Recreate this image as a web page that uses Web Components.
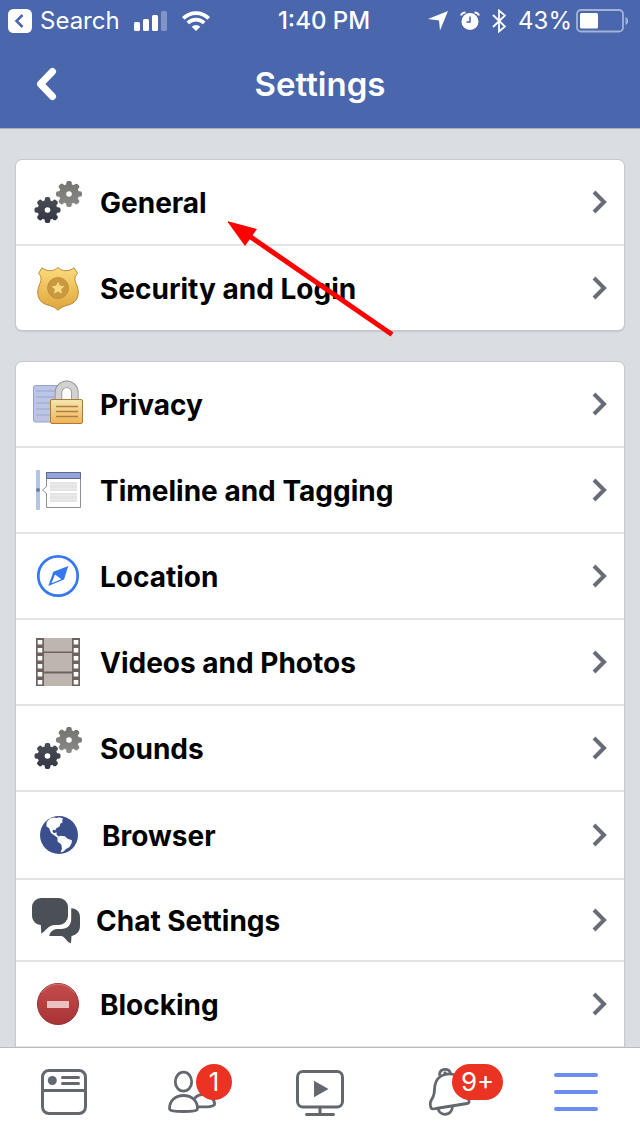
<!DOCTYPE html>
<html lang="en">
<head>
<meta charset="utf-8">
<meta name="viewport" content="width=device-width, initial-scale=1">
<title>Settings</title>
<style>
  body {
    margin: 0;
    font-family: Inter, Roboto, "Liberation Sans", sans-serif;
  }
</style>
</head>
<body>
<settings-screen>
  <status-bar slot="top" back="Search" time="1:40 PM" battery="43%"></status-bar>
  <nav-header slot="top">Settings</nav-header>

  <settings-group>
    <settings-row icon="gears">General</settings-row>
    <settings-row icon="badge">Security and Login</settings-row>
  </settings-group>
  <settings-group continued>
    <settings-row icon="lock">Privacy</settings-row>
    <settings-row icon="timeline">Timeline and Tagging</settings-row>
    <settings-row icon="compass">Location</settings-row>
    <settings-row icon="film">Videos and Photos</settings-row>
    <settings-row icon="gears">Sounds</settings-row>
    <settings-row icon="globe">Browser</settings-row>
    <settings-row icon="chat">Chat Settings</settings-row>
    <settings-row icon="block">Blocking</settings-row>
  </settings-group>
  <pointer-arrow></pointer-arrow>

  <tab-bar slot="bottom">
    <tab-item icon="feed" label="News Feed"></tab-item>
    <tab-item icon="friends" label="Friend Requests" count="1"></tab-item>
    <tab-item icon="video" label="Videos"></tab-item>
    <tab-item icon="bell" label="Notifications" count="9+"></tab-item>
    <tab-item icon="menu" label="Menu"></tab-item>
  </tab-bar>
</settings-screen>

<script>
// eight-toothed gear outline, used as a clip so that the gradient stays whole
const gear = (id, x, y) => `
  <clipPath id="${id}">
    <circle cx="${x}" cy="${y}" r="10"/>
    ${[0, 45, 90, 135].map((a) => `<rect x="${x - 2.8}" y="${y - 13}" width="5.6" height="26" rx="2" transform="rotate(${a} ${x} ${y})"/>`).join("")}
  </clipPath>`;

const ICONS = {
  gears: {
    size: 52,
    art: `
      <defs>
        ${gear("a", 15.5, 34)}
        ${gear("b", 37, 18)}
        <linearGradient id="dark" x2="0" y2="1"><stop stop-color="#4b4d55"/><stop offset="1" stop-color="#333544"/></linearGradient>
        <linearGradient id="light" x2="0" y2="1"><stop stop-color="#72736f"/><stop offset="1" stop-color="#8a8a89"/></linearGradient>
      </defs>
      <rect x="24" y="5" width="26" height="26" fill="url(#light)" clip-path="url(#b)"/>
      <circle cx="37" cy="18" r="2.8" fill="#fff"/>
      <rect x="2" y="21" width="27" height="26" fill="url(#dark)" clip-path="url(#a)"/>
      <circle cx="15.5" cy="34" r="2.8" fill="#fff"/>`
  },
  badge: {
    size: 52,
    art: `
      <defs><linearGradient id="gold" x2="0" y2="1"><stop stop-color="#fbdc7b"/><stop offset="1" stop-color="#dfa53a"/></linearGradient></defs>
      <path d="M26 5.5C22 9.5 15 10 10 5.8L6.5 11.5C10.5 15 9 19.5 7.3 23C4 31 5.5 40 15 42.8C20 44 23.5 45.5 26 48.3C28.5 45.5 32 44 37 42.8C46.5 40 48 31 44.7 23C43 19.5 41.5 15 45.5 11.5L42 5.8C37 10 30 9.5 26 5.5Z" fill="url(#gold)" stroke="#b58a3a"/>
      <circle cx="26" cy="26" r="10.5" fill="#c9993f" stroke="#b98c39" stroke-width=".8"/>
      <path d="M26 19.5l1.9 4.2 4.6.5-3.4 3.1.9 4.5-4-2.3-4 2.3.9-4.5-3.4-3.1 4.6-.5z" fill="#fbd981"/>`
  },
  lock: {
    size: 52,
    art: `
      <defs><linearGradient id="brass" x2="0" y2="1"><stop stop-color="#f9e5b0"/><stop offset="1" stop-color="#f0b350"/></linearGradient></defs>
      <rect x="1.5" y="7.5" width="27" height="36.5" rx="2" fill="#bcc5e4" stroke="#95a2d2"/>
      <path d="M4 13h20M4 19h20M4 25h16M4 31h16M4 37h16" stroke="#aab5dc" stroke-width="2"/>
      <path d="M26.5 22V14.5a8.2 8.2 0 0 1 16.400 0V22" fill="#fff" stroke="#8f8f8f" stroke-width="7.5"/>
      <path d="M26.5 22V14.5a8.2 8.2 0 0 1 16.400 0V22" fill="none" stroke="#d0d2d2" stroke-width="5.8"/>
      <rect x="18.5" y="21.5" width="32" height="24" rx="1.5" fill="url(#brass)" stroke="#a87b3c"/>
      <path d="M24 28.5h22M24 33.5h22M24 38.5h22" stroke="#a98143" stroke-width="1.3"/>`
  },
  timeline: {
    size: 52,
    art: `
      <rect x="4" y="6" width="4" height="40" rx="1" fill="#b4c5e2"/>
      <circle cx="6" cy="26" r="2" fill="#6c7db4"/>
      <path d="M14.5 8.5h34v35h-34v-14l-4-3.5 4-3.5z" fill="#fff" stroke="#8c8f96"/>
      <path d="M14.5 8.5h34v6h-34z" fill="#94a3d6" stroke="#5b6894"/>
      <path d="M18 18h27v9H18zM18 29h27v9H18z" fill="#e4e4e4"/>
      <path d="M18 20.5h27M18 24.5h27M18 31.5h27M18 35.5h27" stroke="#ebebeb"/>`
  },
  compass: {
    size: 52,
    art: `
      <circle cx="26" cy="26" r="19.7" fill="none" stroke="#3578f0" stroke-width="2.7"/>
      <path d="M36.300 16L32 29.5 16.300 36 21.300 21.700z" fill="#3578f0"/>
      <path d="M23 24.500l6.300 4.800-9.800 4z" fill="#fff"/>`
  },
  film: {
    size: 52,
    art: `
      <path d="M4 2h44v48H4z" fill="#6d625d"/>
      <path d="M12 2h28v13.500H12zM12 17h28v18.500H12zM12 37.500h28V50H12z" fill="#bfb5b0"/>
      <path d="M8 4v46M44 4v46" stroke="#fff" stroke-width="4.600" stroke-dasharray="4.400 3.600"/>`
  },
  globe: {
    size: 54,
    art: `
      <circle cx="27" cy="27" r="19" fill="#3a4f8b"/>
      <path d="M14.500 14L18 10.500 22 9.500 25 10 27 9.200 31 10.500 30 13 31 14 28.500 15.500 27.500 18.500 24 20.500 23.500 22.300 21 21.800 20.500 23.500 22 25.200 24.500 24.300 24.700 27 27 28.500 26 30 22.500 27.500 19 25 17 20 14.500 18.500z" fill="#fff"/>
      <path d="M25.500 30L28 27.800 33 28.200 35.500 30.800 40 32.200 39.500 35.500 37.500 39 34 41 31.500 43.500 28.500 44.500 30 40.500 29.300 36.500 25.500 33.500z" fill="#fff"/>`
  },
  chat: {
    size: 48,
    art: `
      <path d="M9 2h18a9 9 0 0 1 9 9v9a9 9 0 0 1-9 9h-5C16 29.500 14 35 9.300 37.500L8.800 29A9 9 0 0 1 0 20v-9a9 9 0 0 1 9-9z" fill="#4b4f56"/>
      <path d="M39.200 12.300C44.500 12.500 48 16 48 21v9c0 5.500-3.500 9-8.500 10L39 47.300C35 46.500 33.500 41 29.500 40H17.300C18 36 20.500 33.500 25 33h4c6.500 0 10.200-4 10.200-10z" fill="#4b4f56"/>`
  },
  block: {
    size: 52,
    art: `
      <defs><linearGradient id="red" x2="0" y2="1"><stop stop-color="#c44c4b"/><stop offset="1" stop-color="#a83235"/></linearGradient></defs>
      <circle cx="26" cy="26" r="20.5" fill="url(#red)" stroke="#993033"/>
      <path d="M10 14.500a19.500 19.500 0 0 1 32 0" fill="none" stroke="#d47772"/>
      <path d="M15 23h22v7H15z" fill="#ecc0bf"/>`
  },
  feed: {
    size: 48,
    art: `
      <g fill="none" stroke="#65676f" stroke-width="3">
        <rect x="2.5" y="2.5" width="43" height="43" rx="6.5"/>
        <path d="M2 22.500h44"/>
        <path d="M22.500 9.500h16M22.500 15.500h16" stroke-linecap="round"/>
      </g>
      <circle cx="12.3" cy="12.5" r="4.5" fill="#65676f"/>`
  },
  friends: {
    size: 48,
    art: `
      <g fill="none" stroke="#65676f" stroke-width="2.8" stroke-linejoin="round">
        <ellipse cx="15.500" cy="13.700" rx="8.200" ry="9.500"/>
        <path d="M15.500 27.500C7.500 27.500 1.500 32.500 1.500 40.500C1.500 43 7 43.500 15.500 43.500S29.500 43 29.500 40.500C29.500 32.500 23.500 27.500 15.500 27.500z"/>
        <path d="M26.500 30.500C29 27.500 32 26.500 35 26.500C41 26.500 46.600 31 46.600 36C46.600 38.500 40 39.300 30 38.800"/>
      </g>`
  },
  video: {
    size: 48,
    art: `
      <g fill="none" stroke="#65676f" stroke-width="3">
        <rect x="1.5" y="3.5" width="45" height="35.5" rx="5.5"/>
        <path d="M24 39v7"/>
        <path d="M10.500 46.500h27" stroke-linecap="round"/>
      </g>
      <path d="M18 12.700L32.500 21 18 29.300z" fill="#65676f"/>`
  },
  bell: {
    size: 48,
    art: `
      <g fill="none" stroke="#65676f" stroke-width="2.8" stroke-linecap="round" stroke-linejoin="round">
        <path d="M15.500 6.500C16 0 25.500-.5 26.500 5.500"/>
        <path d="M30 6.500C21 4.500 13 8 11 17C10 23 11 25 9 29C6 34 5.500 36 7 40C8 41.500 10 41 12 40.500L43 35.500C46 35 45.500 32 43.500 30.500"/>
        <path d="M14 40.500C15.500 48.500 28 48.500 28.500 38.500"/>
      </g>
      <circle cx="21" cy="4.800" r="1.600" fill="#65676f"/>`
  },
  menu: {
    size: 48,
    art: `<path d="M4 7h40M4 24h40M4 41h40" stroke="#6b8df0" stroke-width="4" stroke-linecap="round"/>`
  }
};

class UiElement extends HTMLElement {
  constructor() {
    super();
    this.attachShadow({ mode: "open" });
  }

  connectedCallback() {
    const template = document.createElement("template");
    template.innerHTML = `<style>${this.constructor.styles}</style>${this.markup}`;
    this.shadowRoot.replaceChildren(template.content.cloneNode(true));
  }
}

class UiIcon extends UiElement {
  static get styles() {
    return `
      :host { display: block; flex: none; }
      svg { display: block; overflow: visible; }
    `;
  }

  get markup() {
    const { size, art } = ICONS[this.getAttribute("name")];
    return `<svg width="${size}" height="${size}" viewBox="0 0 ${size} ${size}" aria-hidden="true">${art}</svg>`;
  }
}

class SettingsScreen extends UiElement {
  static get styles() {
    return `
      :host {
        display: flex;
        flex-direction: column;
        height: 100vh;
        background: #dadde1;
      }
      main {
        position: relative;
        flex: 1;
        min-height: 0;
        box-sizing: border-box;
        padding: 31px 16px 0;
        display: flex;
        flex-direction: column;
        gap: 32px;
        overflow-y: auto;
        scrollbar-width: none;
      }
      header, footer { flex: none; }
      header { background: #4a66ad; }
    `;
  }

  get markup() {
    return `
      <header><slot name="top"></slot></header>
      <main><slot></slot></main>
      <footer><slot name="bottom"></slot></footer>
    `;
  }
}

class StatusBar extends UiElement {
  static get styles() {
    return `
      :host {
        display: grid;
        grid-template-columns: 1fr auto 1fr;
        align-items: center;
        height: 40px;
        padding-left: 8px;
        color: #fff;
        font-size: 24px;
        line-height: 42px;
      }
      a {
        display: flex;
        align-items: center;
        gap: 8px;
        color: inherit;
        text-decoration: none;
      }
      div { display: flex; align-items: center; gap: 14px; }
      .right { justify-content: flex-end; gap: 12px; padding-right: 12px; }
      .power { gap: 4px; }
      time { font-weight: 500; }
      svg { display: block; flex: none; }
    `;
  }

  get markup() {
    return `
      <div>
        <a href="#search">
          <svg width="24" height="24"><rect width="24" height="24" rx="5.5" fill="#fff"/><path d="M14.500 6L8.500 12l6 6" fill="none" stroke="#4a66ad" stroke-width="2.5"/></svg>
          <span>${this.getAttribute("back")}</span>
        </a>
        <svg width="34" height="20" fill="#fff"><rect y="11" width="6" height="9" rx="1.5"/><rect x="9" y="8" width="6" height="12" rx="1.5"/><rect x="18" y="4" width="6" height="16" rx="1.5"/><rect x="27" width="6" height="20" rx="1.5" opacity=".3"/></svg>
        <svg width="28" height="20" fill="none" stroke="#fff" stroke-width="3.8"><path d="M1.300 7.300a18 18 0 0 1 25.400 0M5.800 12a11.600 11.600 0 0 1 16.400 0"/><path d="M14 20l-4.300-4.300a6 6 0 0 1 8.600 0z" fill="#fff" stroke="none"/></svg>
      </div>
      <time>${this.getAttribute("time")}</time>
      <div class="right">
        <svg width="20" height="20"><path d="M20 0L12 19.500 11 9.500 0 8z" fill="#fff"/></svg>
        <svg width="20" height="20"><circle cx="10" cy="10.5" r="8.5" fill="#fff"/><path d="M10 5.500v5.500H6.500" fill="none" stroke="#4a66ad" stroke-width="1.5"/><path d="M1 4.500Q2 1.500 5.500 1.500M19 4.500Q18 1.500 14.500 1.500" fill="none" stroke="#fff" stroke-width="2"/></svg>
        <svg width="14" height="24"><path d="M1 6l12 11.500L7 22.500v-21l6 5L1 18" fill="none" stroke="#fff" stroke-width="1.8"/></svg>
        <div class="power">
          <span>${this.getAttribute("battery")}</span>
          <svg width="52" height="24"><rect x="1" y="1" width="46" height="21.500" rx="4" fill="none" stroke="#fff" stroke-width="1.8" opacity=".5"/><rect x="4" y="4" width="18" height="15.500" rx="1.5" fill="#fff"/><path d="M49.500 8v8q3-1.500 3-4t-3-4z" fill="#fff" opacity=".5"/></svg>
        </div>
      </div>
    `;
  }
}

class NavHeader extends UiElement {
  static get styles() {
    return `
      :host {
        display: grid;
        grid-template-columns: 1fr auto 1fr;
        align-items: center;
        height: 88px;
        border-bottom: 1px solid #a9b0c0;
        color: #fff;
      }
      button {
        justify-self: start;
        margin: 0 0 0 32px;
        padding: 0;
        border: 0;
        background: none;
      }
      svg { display: block; }
      h1 { margin: 0; font-size: 33px; font-weight: 600; line-height: 40px; }
    `;
  }

  get markup() {
    return `
      <button type="button" aria-label="Back">
        <svg width="28" height="36"><path d="M20.500 5.500L8.500 18l12 12.500" fill="none" stroke="#fff" stroke-width="7" stroke-linecap="round" stroke-linejoin="round"/></svg>
      </button>
      <h1><slot></slot></h1>
    `;
  }
}

class SettingsGroup extends UiElement {
  static get styles() {
    return `
      :host {
        display: flex;
        flex-direction: column;
        flex: none;
        border-radius: 6px;
        background: #fff;
        box-shadow: 0 0 0 1px #c6c9cf, 0 1px 2px #9a9ea6;
      }
      :host([continued]) { border-radius: 6px 6px 0 0; }
      ::slotted(:not(:last-child)) { border-bottom: 2px solid #e3e4e6; }
      :host([continued]) ::slotted(*) { border-bottom: 2px solid #e3e4e6; }
    `;
  }

  get markup() {
    return `<slot></slot>`;
  }
}

class SettingsRow extends UiElement {
  static get styles() {
    return `
      :host { display: block; }
      a {
        display: flex;
        align-items: center;
        gap: 16px;
        padding: 16px;
        color: #000;
        font-size: 28px;
        font-weight: 700;
        line-height: 36px;
        text-decoration: none;
      }
      span { flex: 1; padding-top: 2px; }
      svg { display: block; }
    `;
  }

  get markup() {
    return `
      <a href="#${this.getAttribute("icon")}">
        <ui-icon name="${this.getAttribute("icon")}"></ui-icon>
        <span><slot></slot></span>
        <svg width="16" height="24" aria-hidden="true"><path d="M2 2l10 10L2 22" fill="none" stroke="#696b77" stroke-width="4"/></svg>
      </a>
    `;
  }
}

// drawn over the rows, pointing at the first one
class PointerArrow extends UiElement {
  static get styles() {
    return `
      :host {
        position: absolute;
        top: 92px;
        left: 228px;
        pointer-events: none;
      }
      svg { display: block; }
    `;
  }

  get markup() {
    return `<svg width="166" height="116" aria-hidden="true"><path d="M22 15.500L164 113.500" stroke="#fe0000" stroke-width="5"/><path d="M-1 0L29 8 17 25z" fill="#fe0000"/></svg>`;
  }
}

class TabBar extends UiElement {
  static get styles() {
    return `
      :host { display: block; border-top: 1px solid #b8babe; background: #fff; }
      nav { display: grid; grid-template-columns: repeat(5, 1fr); }
    `;
  }

  get markup() {
    return `<nav><slot></slot></nav>`;
  }
}

class TabItem extends UiElement {
  static get styles() {
    return `
      :host { display: block; }
      button {
        display: flex;
        justify-content: center;
        width: 100%;
        padding: 20px 0;
        border: 0;
        background: none;
        font: inherit;
      }
      .icon { position: relative; }
      .count {
        position: absolute;
        top: -4px;
        left: 28px;
        min-width: 36px;
        box-sizing: border-box;
        padding: 0 9px;
        border-radius: 18px;
        background: #ea3323;
        color: #fff;
        font-size: 26px;
        line-height: 36px;
      }
    `;
  }

  get markup() {
    const count = this.getAttribute("count");
    return `
      <button type="button" aria-label="${this.getAttribute("label")}">
        <span class="icon">
          <ui-icon name="${this.getAttribute("icon")}"></ui-icon>
          ${count ? `<span class="count">${count}</span>` : ""}
        </span>
      </button>
    `;
  }
}

customElements.define("ui-icon", UiIcon);
customElements.define("settings-screen", SettingsScreen);
customElements.define("status-bar", StatusBar);
customElements.define("nav-header", NavHeader);
customElements.define("settings-group", SettingsGroup);
customElements.define("settings-row", SettingsRow);
customElements.define("pointer-arrow", PointerArrow);
customElements.define("tab-bar", TabBar);
customElements.define("tab-item", TabItem);
</script>
</body>
</html>
